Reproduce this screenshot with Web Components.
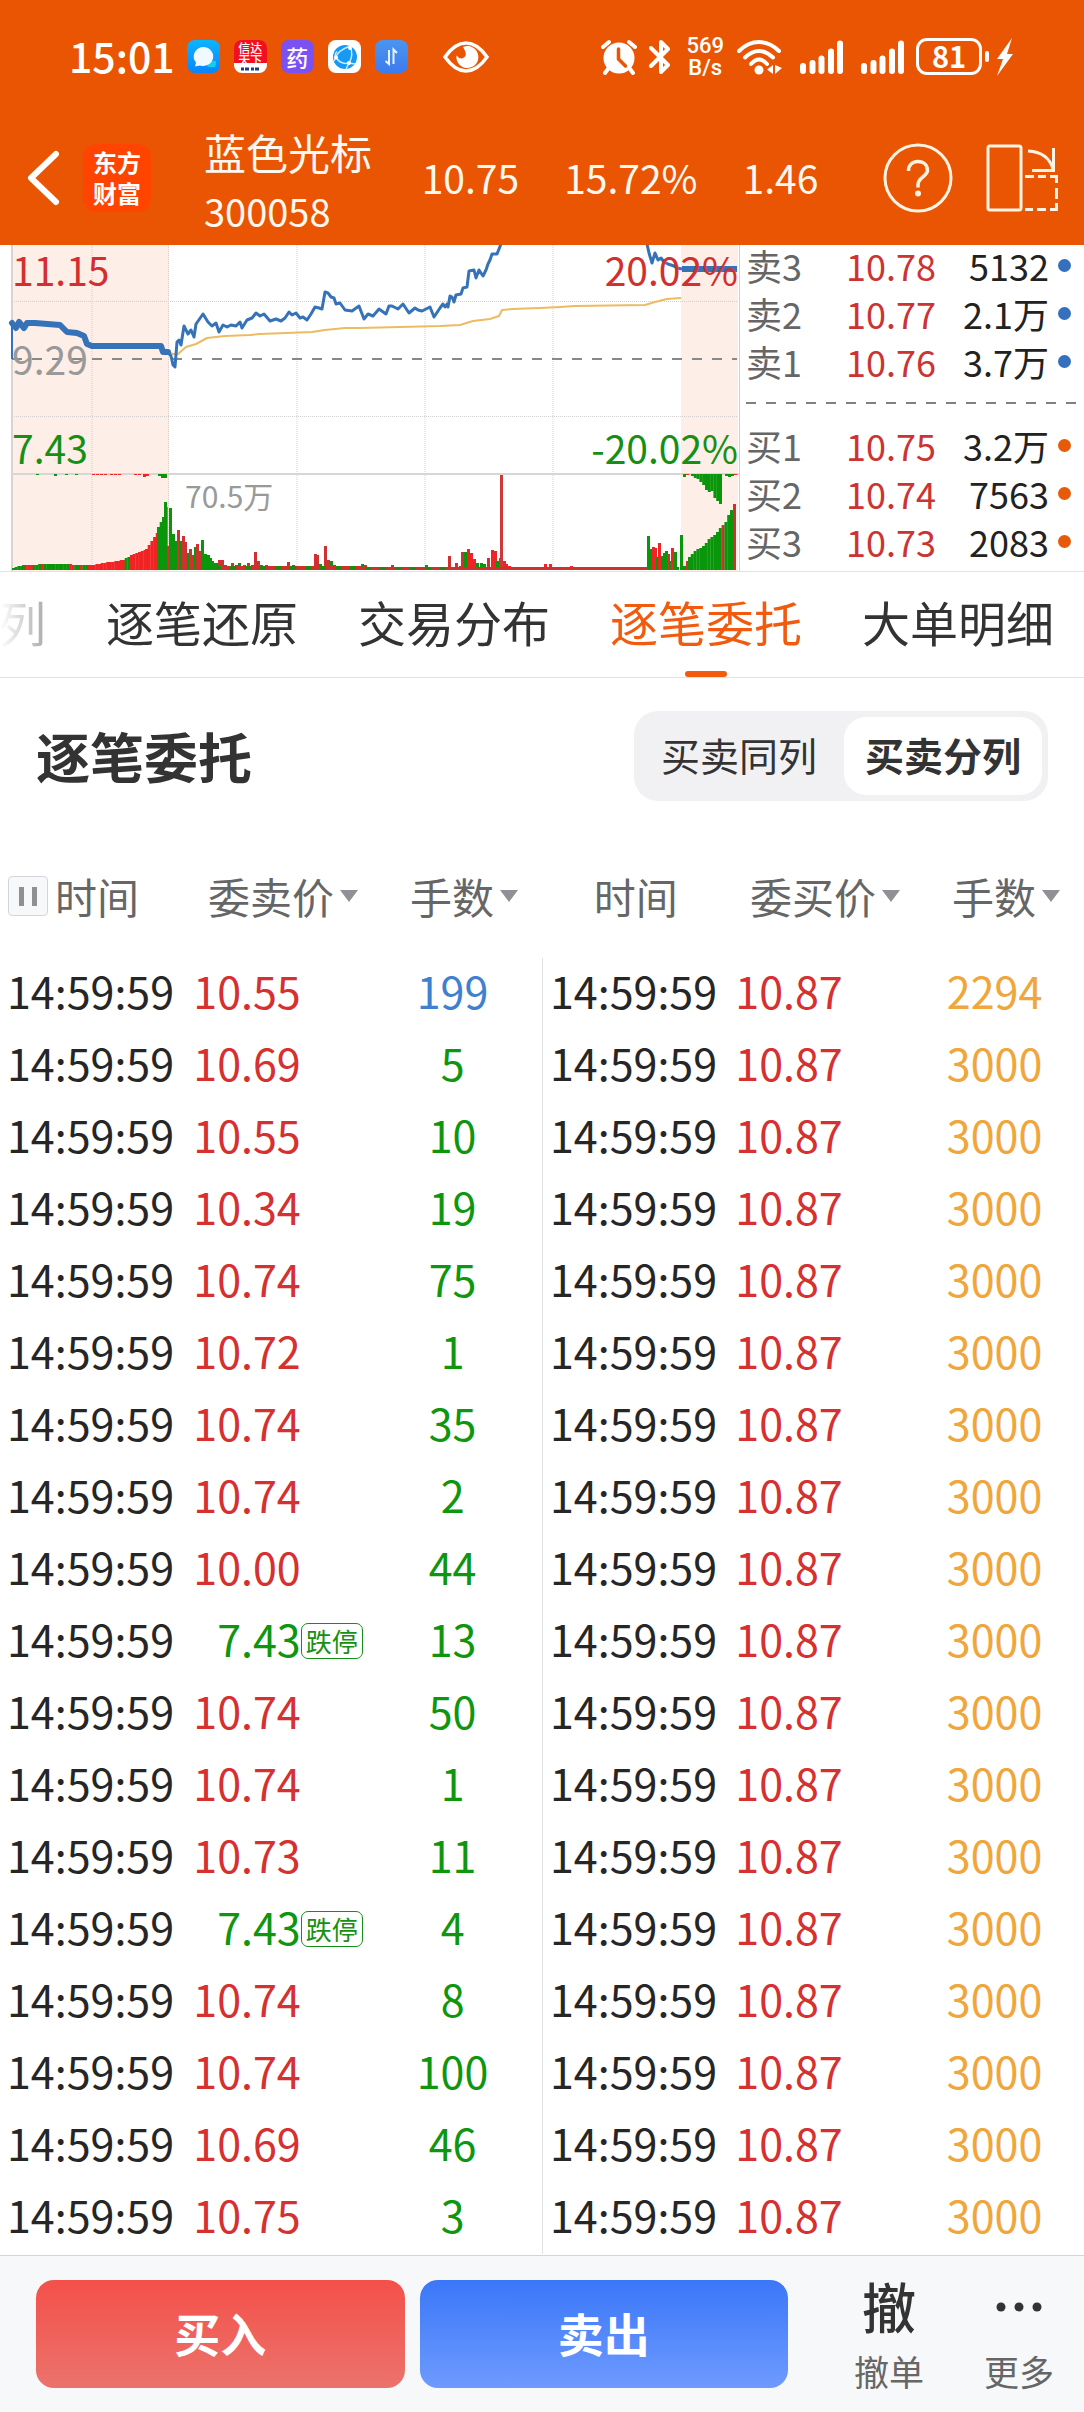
<!DOCTYPE html>
<html lang="zh-CN">
<head>
<meta charset="utf-8">
<meta name="viewport" content="width=device-width, initial-scale=1">
<title>蓝色光标 300058</title>
<style>
  body { margin: 0; background: #fff; font-family: "Noto Sans CJK SC", "Liberation Sans", sans-serif; color: #262626; }
</style>
</head>
<body>
<trade-page></trade-page>

<script>
const RESET = `
  * { box-sizing: border-box; }
  button { font: inherit; color: inherit; background: none; border: 0; margin: 0; padding: 0; cursor: pointer; }
  svg { display: block; flex: none; }
`;

function define(name, render) {
  customElements.define(name, class extends HTMLElement {
    connectedCallback() {
      if (this.shadowRoot) return;
      const root = this.attachShadow({ mode: 'open' });
      const tpl = document.createElement('template');
      tpl.innerHTML = render(this);
      root.append(tpl.content.cloneNode(true));
    }
  });
}

/* ---------- system status bar ---------- */
define('app-badge', () => `
  <style>${RESET}
    :host { display: block; width: 33px; height: 33px; border-radius: 8px; overflow: hidden; flex: none; color: #fff; }
  </style><slot></slot>`);

define('signal-bars', () => `
  <style>:host { display: block; } svg { display: block; }</style>
  <svg width="43" height="34" viewBox="0 0 43 34" stroke="#fff" stroke-width="6" stroke-linecap="round">
    <path d="M3 26v5M12.500 23v8M21.500 18.500V31M31 11.500V31M40 3.500V31"/>
  </svg>`);

define('status-bar', () => `
  <style>${RESET}
    :host { display: flex; align-items: center; height: 113px; padding: 0 70px 0 69px; color: #fff; }
    time { font-size: 41px; line-height: 46px; padding-bottom: 4px; font-weight: 500; }
    .apps { display: flex; gap: 14px; margin-left: 12px; }
    .xd { display: block; background: linear-gradient(#f01020 0 70%, #fff 70%); height: 33px; padding-top: 2px; font-size: 12px; line-height: 12px; text-align: center; font-weight: 500; }
    .xd svg { margin: 1px auto 0; }
    .yao { display: block; background: #7a52f4; font-size: 22px; line-height: 32px; height: 33px; text-align: center; font-weight: 500; }
    .eye { margin-left: 35px; }
    .sys { margin-left: auto; display: flex; align-items: center; }
    .rate { font-family: Roboto, "Noto Sans CJK SC", sans-serif; font-size: 22px; line-height: 22px; font-weight: 500; margin: 0 13px 0 15px; text-align: center; }
    .gap { margin-left: 18px; }
    .bat { width: 66px; height: 37px; border: 3px solid #fff; border-radius: 11px; font-size: 29px; line-height: 29px; font-weight: 700; text-align: center; margin-left: 12px; }
    .nub { width: 4px; height: 11px; border-radius: 2px; background: #fff; margin: 0 7px 0 3px; }
  </style>
  <time>15:01</time>
  <div class="apps">
    <app-badge><svg width="33" height="33"><defs><linearGradient id="a" x2="0" y2="1"><stop stop-color="#0cb4ff"/><stop offset="1" stop-color="#0a84fb"/></linearGradient></defs><rect width="33" height="33" fill="url(#a)"/><path d="M22 21h7q0 4-1 6-5 1-8-1z" fill="#10d0f0"/><path d="M16 7a10 9.500 0 1 1-3 18.500l-5 1 1-4A10 9.500 0 0 1 16 7z" fill="#f0f9ff"/></svg></app-badge>
    <app-badge><span class="xd">信达<br>天下<svg width="18" height="4"><path d="M0 2h3m1 0h4m2 0h3m1 0h4" stroke="#223a80" stroke-width="3"/></svg></span></app-badge>
    <app-badge><span class="yao">药</span></app-badge>
    <app-badge><svg width="33" height="33"><rect width="33" height="33" fill="#fff"/><circle cx="17" cy="17" r="12" fill="#159af5"/><path d="M22 6Q9 11 8 17.500 13 25 21 23M22 6q4 9-1 17l-3 6M8 17.500q-2-3 1-6M8 17.500 6 21M21 23l6 1" fill="none" stroke="#c9ebff" stroke-width="1.500"/><circle cx="8" cy="17.500" r="2" fill="#fff"/><circle cx="22" cy="8" r="2" fill="#fff"/><circle cx="21" cy="23" r="2" fill="#fff"/></svg></app-badge>
    <app-badge><svg width="33" height="33"><defs><linearGradient id="b" x2="0" y2="1"><stop stop-color="#4b95f0"/><stop offset="1" stop-color="#3c7bee"/></linearGradient></defs><rect width="33" height="33" fill="url(#b)"/><path d="M10.500 21 14 24V10M18.500 24V9.500l3.500 3.500" fill="none" stroke="#e8f3ff" stroke-width="2"/></svg></app-badge>
  </div>
  <svg class="eye" width="46" height="32" viewBox="0 0 46 32"><path d="M2 16C9 6 16 2 23 2s14 4 21 14C37 26 30 30 23 30S9 26 2 16z" fill="none" stroke="#fff" stroke-width="3.500"/><path d="M20 6a11 11 0 1 1-6.500 8.500Q17 19 21 16.500T20 6z" fill="#fff"/></svg>
  <div class="sys">
    <svg width="36" height="36" viewBox="0 0 36 36"><circle cx="18" cy="19" r="15.500" fill="#fff"/><path d="m2 8 6-5M34 8l-6-5M7 30l-3 4M29 30l3 4" stroke="#fff" stroke-width="4" stroke-linecap="round"/><path d="M17.500 10v10l7 7" fill="none" stroke="#e95502" stroke-width="3.500" stroke-linecap="round"/></svg>
    <svg width="22" height="36" viewBox="0 0 22 36" style="margin-left:12px"><path d="m2 9 17 17-7 7V3l7 7L2 27" fill="none" stroke="#fff" stroke-width="4" stroke-linejoin="round" stroke-linecap="round"/></svg>
    <div class="rate">569<br>B/s</div>
    <svg width="45" height="36" viewBox="0 0 45 36"><g fill="none" stroke="#fff" stroke-width="4" stroke-linecap="round"><path d="M2 12Q11 3 22 3t20 9"/><path d="M8 18.500q7-6.500 14-6.500t14 6.500"/><path d="M14 25q4-4.500 8-4.500t8 4.500"/></g><circle cx="22" cy="31" r="4.500" fill="#fff"/><path d="M36 26v9l-6-4.500zM38 26v9l7-6z" fill="#fff"/></svg>
    <signal-bars class="gap"></signal-bars>
    <signal-bars class="gap"></signal-bars>
    <div class="bat">81</div><div class="nub"></div>
    <svg width="18" height="38" viewBox="0 0 18 38"><path d="M16 0 1 21h6L1 38l16-22h-6z" fill="#fff"/></svg>
  </div>`);

/* ---------- stock title bar ---------- */
define('stock-header', () => `
  <style>${RESET}
    :host { display: flex; align-items: center; height: 132px; padding: 0 25px 2px 26px; color: #fff8f0; }
    .logo { width: 68px; height: 68px; border-radius: 14px; background: #ff4400; color: #fff; font-size: 24px; line-height: 31px; font-weight: 700; text-align: center; padding-top: 2px; margin-left: 23px; flex: none; }
    .name { margin-left: 53px; padding-top: 5px; }
    h1 { margin: 0; font-size: 42px; line-height: 59px; font-weight: 400; white-space: nowrap; }
    .code { font-size: 38px; line-height: 59px; }
    .quote { display: flex; gap: 45px; flex: 1; justify-content: center; font-size: 39px; line-height: 56px; padding: 0 15px 2px 0; }
    .tools { display: flex; gap: 33px; }
  </style>
  <button aria-label="返回"><svg width="34" height="56" viewBox="0 0 34 56"><path d="M30 4 5 28l25 24" fill="none" stroke="#fff" stroke-width="6" stroke-linecap="round" stroke-linejoin="round"/></svg></button>
  <div class="logo">东方<br>财富</div>
  <div class="name"><h1>蓝色光标</h1><div class="code">300058</div></div>
  <div class="quote"><span>10.75</span><span>15.72%</span><span>1.46</span></div>
  <div class="tools">
    <button aria-label="帮助"><svg width="70" height="70" viewBox="0 0 70 70" fill="none" stroke="#fff3e4" stroke-width="3"><circle cx="35" cy="35" r="33"/><path d="M25.500 28c0-6 4-9.500 9.500-9.500s9.500 3.500 9.500 9-9.500 7-9.500 14v3" stroke-width="3.500"/><circle cx="35" cy="50.500" r="3" fill="#fff3e4" stroke="none"/></svg></button>
    <button aria-label="横屏"><svg width="73" height="68" viewBox="0 0 73 68" fill="none" stroke="#fff3e4" stroke-width="3"><rect x="2" y="2" width="33" height="64" rx="2"/><path d="M42 7q20 1 25 18M67.500 4v22.500H46"/><path d="M39 32.500h9M52 32.500h8M64 32.500h6.500V39M70.500 44v11M70.500 59v6.500H64M60 65.500h-9M47 65.500h-8"/></svg></button>
  </div>`);

/* ---------- intraday chart ---------- */
const BASE = 570;
function volumeBars() {
  const R = '#f02424', G = '#0a960a', D = '#cf3030';
  const out = [];
  const bar = (x, h, c, w = 3) => out.push(`<rect x="${x}" y="${BASE - h}" width="${w}" height="${h}" fill="${c}"/>`);
  const ramp = (pts, colour, step) => {
    for (let i = 0; i < pts.length - 1; i++) {
      const [x0, h0] = pts[i], [x1, h1] = pts[i + 1];
      for (let x = x0; x < x1; x += step) bar(x, Math.round(h0 + (h1 - h0) * (x - x0) / (x1 - x0)), colour(x), step + 0.3);
    }
  };
  /* opening call auction */
  ramp([[12, 2], [22, 5], [50, 6], [90, 5], [122, 10], [130, 15], [145, 21], [157, 39]],
    x => (x < 24 || (x > 32 && x < 39) || (x > 41 && x < 67) || (x > 72 && x < 78) || (x > 81 && x < 86) || (x > 123 && x < 129)) ? G : R, 2.7);
  ramp([[157, 43], [162, 53], [165, 64]], () => G, 2.7);
  bar(164, 68, G); bar(167, 24, D); bar(169, 62, G); bar(172, 36, G); bar(174, 29, G);
  [[177,40],[179,29],[182,34],[184,28],[187,17],[189,21],[191,15],[194,23],[196,26],[198,19],[201,30],[204,16],[207,15],[209,12],[211,9],[213,7],[216,7],[218,10],[221,10],[224,5],[231,7],[235,5],[238,7],[243,5],[247,7],[251,5],[254,18],[257,9],[260,5],[265,5],[287,8],[292,5],[314,16],[316,15],[319,6],[324,24],[327,10],[330,9],[333,5],[340,4],[361,6],[364,5],[391,5],[425,5]]
    .forEach(([x, h], i) => bar(x, h, x > 203 && x < 218 || i % 3 === 1 ? G : D));
  for (let x = 215; x < 450; x += 3) bar(x, x > 360 ? 3 : 4, (x * 7) % 5 < 2 ? '#22880c' : D);
  /* continuous session */
  [[448,14,D],[455,7,D],[459,4,D],[461,18,D],[464,18,G],[467,21,R],[470,17,R],[473,11,R],[476,7,G],[480,7,G],[483,6,G],[487,12,D],[491,20,R],[494,19,R],[496,9,G],[499,12,R],[503,9,R],[505,6,R],[508,4,R],[544,6,R],[549,6,R],[570,4,R]]
    .forEach(b => bar(...b));
  bar(500, 95, '#d03838', 3);
  bar(450, 3, D, 198);
  [[647,34,G],[650,21,G],[652,23,R],[654,22,R],[656,13,G],[658,27,R],[661,14,G],[663,17,G],[665,19,G],[667,16,D],[669,9,G],[671,22,R],[674,18,G],[676,3,G],[680,35,G],[683,4,G],[686,9,D]]
    .forEach(b => bar(...b));
  /* closing call auction */
  [13,16,19,21,22,24,27,31,33,35,38,42,45,48,55,60].forEach((h, i) => bar(688 + i * 2.8, h, i === 12 ? D : G, 3));
  bar(733, 66, D);
  /* unmatched volume hanging from the divider */
  const hang = (x, h, c) => out.push(`<rect x="${x}" y="474" width="3" height="${h}" fill="${c}"/>`);
  [2,4,5,8,11,16,18,17,24,27,30].forEach((h, i) => hang(691 + i * 2.8, h, '#0a960a'));
  hang(683, 3, G); hang(686, 1, R); hang(725, 2, G); hang(728, 3, G); hang(731, 2, G); hang(734, 1, R);
  [[36,1],[54,2],[65,1],[75,1]].forEach(([x,h]) => hang(x, h, G));
  [92,96,100,104,110,114,118,134,138].forEach(x => hang(x, 1, R));
  hang(143, 3, R); hang(146, 2, R); hang(158, 2, G); hang(161, 4, G); hang(164, 4, G);
  return out.join('');
}

define('price-chart', () => `
  <style>${RESET}
    :host { display: grid; grid-template: 326px / minmax(0, 1fr); font-size: 39px; line-height: 40px; color: #999; }
    svg, .labels { grid-area: 1 / 1; }
    svg { width: 100%; height: 100%; }
    .labels { padding: 4px 1px 0 12px; }
    .line { display: flex; justify-content: space-between; height: 89px; }
    .line.last { height: 48px; }
    .up { color: #d32f2f; } .down { color: #159015; }
    .vol { font-size: 30px; padding-left: 173px; }
  </style>
  <svg viewBox="0 245 739 326" preserveAspectRatio="none">
    <path d="M12 245h157v326H12zM681 245h57v326h-57z" fill="#fdeee7"/>
    <path d="M92 245v326M168.500 245v326M297 245v326M425 245v326M553 245v326M12 301.500h725M12 416.500h725" stroke="#d4d0d0" stroke-width="1" stroke-dasharray="1 1"/>
    <path d="M12 245v326" stroke="#d8d4d2" stroke-width="2"/>
    <path d="M12 359h725" stroke="#888" stroke-width="2" stroke-dasharray="10 10"/>
    <path d="M12 474h727" stroke="#d6d6d6" stroke-width="2"/>
    ${volumeBars()}
    <g fill="none" stroke-linejoin="round">
      <polyline stroke="#ecbb62" stroke-width="2" points="168,352 173,354 178,354 186,347 196,344 207,338 225,336 250,335 260,334 312,332 325,330 345,328 360,328 440,326 460,325 473,321 490,319 499,316 502,310 512,309 540,308 560,307 575,306 645,305 655,302 667,299 681,298"/>
      <g stroke="#3572b8">
        <path d="M12 323v36" stroke-width="2"/>
        <polyline stroke-width="6" stroke-linecap="round" points="12,323 16,328 19,322 24,328 27,323 35,323 60,325 67,332 77,333 84,336 87,344 92,346 161,346 163,352 168,352"/>
        <polyline stroke-width="3" points="168,352 171,356 173,365 175,367 177,342 179,340 181,345 184,326 188,334 191,330 194,337 196,324 203,314 208,322 212,326 216,323 219,332 223,325 227,327 231,325 236,326 240,322 242,328 247,320 252,318 256,313 260,316 264,314 270,321 276,319 281,321 285,318 289,312 292,315 296,313 300,318 303,317 307,320 311,314 315,307 319,308 322,309 325,292 328,293 331,297 334,298 336,304 340,303 345,310 352,311 359,306 364,319 368,314 373,316 379,309 386,314 389,306 392,306 398,309 403,304 409,313 415,308 418,310 422,311 430,307 434,317 440,308 443,304 445,307 447,304 448,307 450,296 452,297 454,302 456,295 461,294 463,288 467,287 469,271 474,270 476,278 479,270 483,276 486,270 488,264 490,260 492,254 497,254 501,244"/>
        <polyline stroke-width="3" points="647,244 649,253 652,263 655,253 658,260 661,258 664,262 668,264 674,266 677,268 682,269"/>
        <path d="M682 269h55" stroke-width="6"/>
      </g>
    </g>
  </svg>
  <div class="labels">
    <div class="line"><span class="up">11.15</span><span class="up">20.02%</span></div>
    <div class="line"><span>9.29</span></div>
    <div class="line last"><span class="down">7.43</span><span class="down">-20.02%</span></div>
    <div class="vol">70.5万</div>
  </div>`);

/* ---------- five-level quotes ---------- */
define('quote-level', el => `
  <style>
    :host { display: flex; align-items: center; font-size: 36px; line-height: 40px; height: 40px; white-space: nowrap; }
    .label { color: #666; flex: 0 0 100px; }
    .price { color: #cc3333; }
    .qty { margin-left: auto; color: #222; }
    i { width: 13px; height: 13px; border-radius: 50%; margin-left: 9px; background: ${el.getAttribute('side') === 'sell' ? '#3370bd' : '#e65a08'}; }
  </style>
  <span class="label">${el.getAttribute('label')}</span><span class="price">${el.getAttribute('price')}</span><span class="qty">${el.getAttribute('qty')}</span><i></i>`);

define('order-book', () => `
  <style>${RESET}
    :host { display: flex; flex-direction: column; gap: 8px; width: 345px; border-left: 1px solid #d0d0d0; padding-left: 6px; }
    quote-level { margin-right: 13px; }
    hr { height: 2px; border: 0; margin: 13px 8px 13px 0; background: repeating-linear-gradient(to right, #808080 0 10px, transparent 10px 20px); }
  </style>
  <quote-level side="sell" label="卖3" price="10.78" qty="5132"></quote-level>
  <quote-level side="sell" label="卖2" price="10.77" qty="2.1万"></quote-level>
  <quote-level side="sell" label="卖1" price="10.76" qty="3.7万"></quote-level>
  <hr>
  <quote-level side="buy" label="买1" price="10.75" qty="3.2万"></quote-level>
  <quote-level side="buy" label="买2" price="10.74" qty="7563"></quote-level>
  <quote-level side="buy" label="买3" price="10.73" qty="2083"></quote-level>`);

/* ---------- tabs ---------- */
define('tab-bar', () => `
  <style>${RESET}
    :host { display: block; border-top: 1px solid #e2e2e4; border-bottom: 1px solid #e2e2e4; overflow: hidden; }
    .tabs { display: flex; justify-content: flex-end; gap: 60px; padding-right: 30px; -webkit-mask-image: linear-gradient(to right, transparent, #000 110px); mask-image: linear-gradient(to right, transparent, #000 110px); }
    button { flex: none; font-size: 48px; line-height: 99px; color: #333; padding-bottom: 6px; }
    button[aria-selected=true] { color: #f25a0e; padding: 0; }
    button[aria-selected=true]::after { content: ""; display: block; width: 42px; height: 6px; border-radius: 3px; margin: 0 auto; background: #f25a0e; }
  </style>
  <div class="tabs" role="tablist">
    <button role="tab">列</button>
    <button role="tab">逐笔还原</button>
    <button role="tab">交易分布</button>
    <button role="tab" aria-selected="true">逐笔委托</button>
    <button role="tab">大单明细</button>
  </div>`);

/* ---------- section title with segmented switch ---------- */
define('section-title', () => `
  <style>${RESET}
    :host { display: flex; align-items: center; justify-content: space-between; padding: 33px 36px 39px; color: #333; }
    h2 { margin: 0; font-size: 54px; line-height: 90px; font-weight: 700; }
    .seg { display: flex; background: #f1f1f4; border-radius: 24px; padding: 6px; }
    button { font-size: 39px; line-height: 74px; padding: 0 27px 4px 21px; border-radius: 22px; color: #333; }
    button:last-child { padding: 0 21px 4px; }
    button[aria-pressed=true] { background: #fff; font-weight: 700; }
  </style>
  <h2><slot></slot></h2>
  <div class="seg">
    <button aria-pressed="false">买卖同列</button>
    <button aria-pressed="true">买卖分列</button>
  </div>`);

/* ---------- order list, one side ---------- */
const SELL = '10.55 199|10.69 5|10.55 10|10.34 19|10.74 75|10.72 1|10.74 35|10.74 2|10.00 44|7.43 13|10.74 50|10.74 1|10.73 11|7.43 4|10.74 8|10.74 100|10.69 46|10.75 3'.split('|').map(r => r.split(' '));
const BUY = SELL.map((_, i) => ['10.87', i ? '3000' : '2294']);

define('order-list', el => {
  const sell = el.getAttribute('side') === 'sell';
  const qtyClass = q => +q >= 1000 ? 'big' : +q > 100 ? 'mid' : 'small';
  const tri = '<svg width="18" height="12" viewBox="0 0 18 12"><path d="M0 0h18L9 12z" fill="#909096"/></svg>';
  const rows = (sell ? SELL : BUY).map(([p, q]) => {
    const limit = p === '7.43';
    return `<tr><td class="t">14:59:59</td><td><div class="p"><span class="${limit ? 'down' : 'up'}">${p}</span>${limit ? '<em>跌停</em>' : ''}</div></td><td class="q ${qtyClass(q)}">${q}</td></tr>`;
  }).join('');
  return `
  <style>${RESET}
    :host { display: block; flex: 1 1 50%; min-width: 0; }
    table { width: 100%; table-layout: fixed; border-collapse: separate; border-spacing: 0; }
    col:nth-child(1) { width: 35%; } col:nth-child(2) { width: 32%; } col:nth-child(3) { width: 33%; }
    th { padding: 0; font-size: 42px; line-height: 60px; font-weight: 400; color: #666; white-space: nowrap; }
    .h { display: flex; align-items: center; justify-content: flex-end; height: 118px; padding-bottom: 6px; }
    .h.time { justify-content: ${sell ? 'flex-start' : 'center'}; padding: 0 ${sell ? 0 : 2}px 6px ${sell ? 8 : 0}px; gap: 7px; }
    .h.lots { padding-right: 24px; }
    .h.price { padding-right: 5px; }
    .h button { display: flex; align-items: center; gap: 6px; }
    .h .pause { width: 40px; height: 40px; justify-content: center; gap: 8px; background: #f7f8fa; border: 1px solid #d3d5da; border-radius: 4px; }
    .pause i { width: 5px; height: 19px; background: #909094; }
    td { height: 72px; padding: 0 0 8px; font-size: 43px; line-height: 64px; white-space: nowrap; }
    td.t { padding-left: 7px; ${sell ? '' : 'border-left: 1px solid #e2e2e4;'} }
    td.q { text-align: center; }
    .p { display: flex; align-items: center; height: 64px; }
    .p span { width: 111px; text-align: right; }
    em { font-style: normal; font-size: 26px; line-height: 34px; border: 1px solid #159015; border-radius: 7px; padding: 0 4px; margin-top: 6px; color: #159015; }
    .up { color: #d63030; } .down, .small { color: #0f960f; } .mid { color: #3f80cf; } .big { color: #f0a63a; }
  </style>
  <table>
    <colgroup><col><col><col></colgroup>
    <thead><tr>
      <th><div class="h time">${sell ? '<button class="pause" aria-label="暂停"><i></i><i></i></button>' : ''}<span>时间</span></div></th>
      <th><div class="h price"><button>${sell ? '委卖价' : '委买价'}${tri}</button></div></th>
      <th><div class="h lots"><button>手数${tri}</button></div></th>
    </tr></thead>
    <tbody>${rows}</tbody>
  </table>`;
});

/* ---------- bottom trade bar ---------- */
define('trade-bar', () => `
  <style>${RESET}
    :host { display: flex; border-top: 1px solid #d3d5d9; background: #f7f8fa; padding: 24px 0 24px 36px; }
    .go { flex: 1; height: 108px; border-radius: 18px; color: #fff; font-size: 46px; line-height: 104px; padding-bottom: 4px; font-weight: 700; }
    .buy { background: linear-gradient(#f4504a, #eb736c); margin-right: 15px; }
    .sell { background: linear-gradient(#3a77f8, #6e9afe); margin-right: 36px; }
    .act { flex: none; width: 130px; display: flex; flex-direction: column; align-items: center; justify-content: flex-start; height: 108px; font-size: 35px; line-height: 50px; color: #666; }
    .act b { flex: none; font-size: 54px; line-height: 52px; height: 66px; font-weight: 500; color: #333; }
    .act svg { margin: 22px 0 34px; }
  </style>
  <button class="go buy">买入</button>
  <button class="go sell">卖出</button>
  <button class="act"><b>撤</b><span>撤单</span></button>
  <button class="act"><svg width="46" height="10"><g fill="#333"><circle cx="5" cy="5" r="4.500"/><circle cx="23" cy="5" r="4.500"/><circle cx="41" cy="5" r="4.500"/></g></svg><span>更多</span></button>`);

define('trade-page', () => `
  <style>${RESET}
    :host { display: flex; flex-direction: column; min-height: 100vh; }
    header { background: #e95502; }
    .market { display: flex; }
    price-chart { flex: 1; min-width: 0; }
    .lists { display: flex; }
    trade-bar { margin-top: auto; }
  </style>
  <header><status-bar></status-bar><stock-header></stock-header></header>
  <section class="market"><price-chart></price-chart><order-book></order-book></section>
  <tab-bar></tab-bar>
  <section-title>逐笔委托</section-title>
  <div class="lists"><order-list side="sell"></order-list><order-list side="buy"></order-list></div>
  <trade-bar></trade-bar>`);
</script>
</body>
</html>
